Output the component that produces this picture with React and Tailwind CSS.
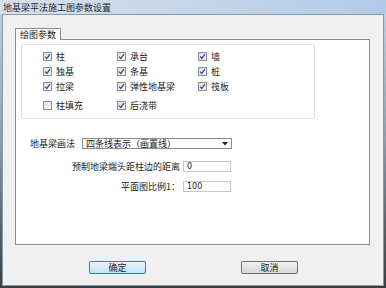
import React from 'react';

const font = { fontFamily: '"Noto Sans CJK SC", "Liberation Sans", sans-serif' };

const Check = ({ checked, label }) => (
    <div className="flex items-center h-[10px]">
        <div className="w-[9px] h-[9px] border border-[#8e8f8f] bg-gradient-to-br from-[#dcdcdc] to-[#fbfbfb] flex items-center justify-center">
            {checked && (
                <svg width="7" height="7" viewBox="0 0 7 7">
                    <path d="M1 3.6 L2.8 5.4 L6 1.2" fill="none" stroke="#2f4f9e" strokeWidth="1.3" />
                </svg>
            )}
        </div>
        <span className="ml-[4px] text-[9px] leading-none text-[#222]">{label}</span>
    </div>
);

const rows = [
    [['柱', true], ['承台', true], ['墙', true]],
    [['独基', true], ['条基', true], ['桩', true]],
    [['拉梁', true], ['弹性地基梁', true], ['筏板', true]],
    [['柱填充', false], ['后浇带', true]],
];

const App = () => {
    return (
        <div className="w-[386px] h-[288px] flex flex-col bg-gradient-to-b from-[#c3d3e4] via-[#8f9aa6] to-[#3a3d40]" style={font}>
            {/* title bar */}
            <div className="h-[14px] flex items-center px-[3px] bg-gradient-to-r from-[#d6e0ea] via-[#c4d6ea] to-[#b0cbe6]">
                <span className="text-[9px] leading-none text-[#1e2a36]">地基梁平法施工图参数设置</span>
            </div>

            <div className="flex-1 flex flex-col mx-[2px] mb-[2px] border border-[#8d98a3] bg-[#f0f0f0]">
                {/* tab control */}
                <div className="ml-[12px] mt-[13px] w-[355px]">
                    <div className="w-[46px] h-[12px] border border-b-0 border-[#898c95] bg-white flex items-center pl-[4px] -mb-px relative">
                        <span className="text-[9px] leading-none text-[#222]">绘图参数</span>
                    </div>
                    <div className="h-[206px] border border-[#898c95] bg-white pt-[4px] pl-[5px]">
                        {/* group box */}
                        <div className="w-[294px] h-[75px] border border-[#dde0e4] rounded-[2px] pt-[6px] pl-[21px] flex flex-col">
                            {rows.map((r, i) => (
                                <div key={i} className={`grid grid-cols-[74px_81px_auto] ${i === 3 ? 'mt-[9px]' : i > 0 ? 'mt-[5px]' : ''}`}>
                                    {r.map(([label, checked]) => (
                                        <Check key={label} label={label} checked={checked} />
                                    ))}
                                </div>
                            ))}
                        </div>

                        {/* select row */}
                        <div className="flex items-center mt-[19px] ml-[9px]">
                            <span className="text-[9px] leading-none text-[#222] w-[52px]">地基梁画法</span>
                            <div className="w-[150px] h-[11px] border border-[#8a8a8a] bg-white flex items-center justify-between pl-[3px] pr-[3px]">
                                <span className="text-[9px] leading-none text-[#222]">四条线表示（画置线）</span>
                                <svg width="6" height="4" viewBox="0 0 6 4">
                                    <path d="M0 0 L6 0 L3 3.5 Z" fill="#222" />
                                </svg>
                            </div>
                        </div>

                        {/* inputs */}
                        <div className="flex items-center mt-[12px]">
                            <span className="w-[162px] text-right text-[9px] leading-none text-[#222] pr-[3px]">预制地梁端头距柱边的距离</span>
                            <div className="w-[48px] h-[11px] border border-[#c5c8cd] bg-white flex items-center pl-[3px]">
                                <span className="text-[8px] leading-none text-[#222]" style={{ fontFamily: '"DejaVu Sans", sans-serif' }}>0</span>
                            </div>
                        </div>
                        <div className="flex items-center mt-[9px]">
                            <span className="w-[162px] text-right text-[9px] leading-none text-[#222] pr-[3px]">平面图比例1：</span>
                            <div className="w-[48px] h-[11px] border border-[#c5c8cd] bg-white flex items-center pl-[3px]">
                                <span className="text-[8px] leading-none text-[#222]" style={{ fontFamily: '"DejaVu Sans", sans-serif' }}>100</span>
                            </div>
                        </div>
                    </div>
                </div>

                {/* buttons */}
                <div className="flex mt-[16px] ml-[86px]">
                    <button className="w-[57px] h-[13px] rounded-[2px] border border-[#3c7fb1] bg-gradient-to-b from-[#eaf6fd] to-[#bfe2f5] flex items-center justify-center text-[9px] leading-none text-[#222]">确定</button>
                    <button className="ml-[95px] w-[57px] h-[13px] rounded-[2px] border border-[#707070] bg-gradient-to-b from-[#f2f2f2] to-[#d6d6d6] flex items-center justify-center text-[9px] leading-none text-[#222]">取消</button>
                </div>
            </div>
        </div>
    );
};

export default App;
